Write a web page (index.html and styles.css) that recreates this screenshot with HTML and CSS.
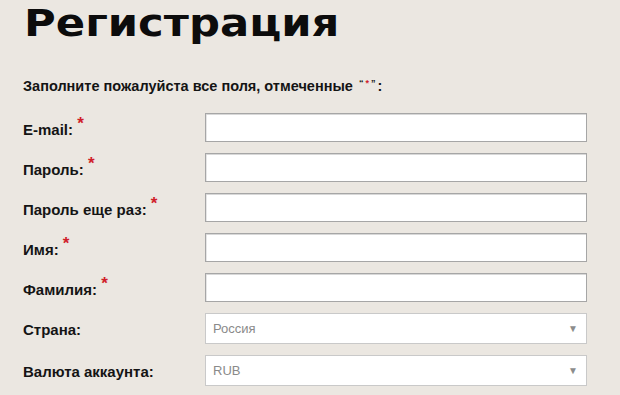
FILE: index.html
```html
<!DOCTYPE html>
<html lang="ru">
<head>
<meta charset="utf-8">
<link rel="stylesheet" href="styles.css">
</head>
<body>
<div class="page">
  <h1 class="title">Регистрация</h1>
  <p class="intro">Заполните пожалуйста все поля, отмеченные <span class="q">“<span class="qs">*</span>”</span>:</p>
  <form class="form">
    <div class="row"><label class="label">E-mail: <span class="req">*</span></label><div class="field"></div></div>
    <div class="row"><label class="label">Пароль: <span class="req">*</span></label><div class="field"></div></div>
    <div class="row"><label class="label">Пароль еще раз: <span class="req">*</span></label><div class="field"></div></div>
    <div class="row"><label class="label">Имя: <span class="req">*</span></label><div class="field"></div></div>
    <div class="row"><label class="label">Фамилия: <span class="req">*</span></label><div class="field"></div></div>
    <div class="row row-sel"><label class="label">Страна:</label><div class="select"><span>Россия</span><span class="arrow">▼</span></div></div>
    <div class="row row-sel"><label class="label">Валюта аккаунта:</label><div class="select"><span>RUB</span><span class="arrow">▼</span></div></div>
  </form>
</div>
</body>
</html>
```
FILE: styles.css
```css
html, body {
  margin: 0;
  padding: 0;
  background: #ebe7e1;
  overflow: hidden;
}
.page {
  padding: 0 0 0 23px;
  font-family: "Liberation Sans", Arial, sans-serif;
  color: #141414;
}
.title {
  width: max-content;
  margin: 0 0 0 1px;
  font-family: "DejaVu Sans", sans-serif;
  font-weight: 900;
  font-size: 38px;
  line-height: 46px;
  letter-spacing: 0px;
  color: #0c0c0c;
  transform: scaleX(1.14);
  transform-origin: left center;
}
.intro {
  margin: 29px 0 0 0;
  font-size: 14.5px;
  font-weight: bold;
  line-height: 16px;
}
.q { font-size: 9px; vertical-align: 5px; letter-spacing: 2px; margin-left: 2px; }
.qs { color: #d0202a; }
.form {
  margin-top: 19px;
  display: flex;
  flex-direction: column;
  gap: 11px;
}
.row {
  display: flex;
  align-items: flex-start;
  height: 29px;
}
.row-sel { height: 31px; }
.label {
  width: 182px;
  padding-top: 8px;
  font-size: 15px;
  font-weight: bold;
  line-height: 17px;
}
.req {
  color: #d0202a;
  font-size: 17px;
  position: relative;
  top: -6px;
}
.field {
  width: 380px;
  height: 27px;
  background: #fff;
  border: 1px solid #a6a6a6;
  box-shadow: inset 0 1px 0 #d8d8d8, inset 1px 0 0 #e6e6e6;
}
.select {
  box-sizing: border-box;
  width: 382px;
  height: 31px;
  background: #fff;
  border: 1px solid #c9c9c9;
  display: flex;
  align-items: center;
  justify-content: space-between;
  padding: 0 8px 0 7px;
  font-size: 13px;
  color: #8a8a8a;
}
.arrow {
  font-size: 10px;
  color: #8c8c8c;
}
```
